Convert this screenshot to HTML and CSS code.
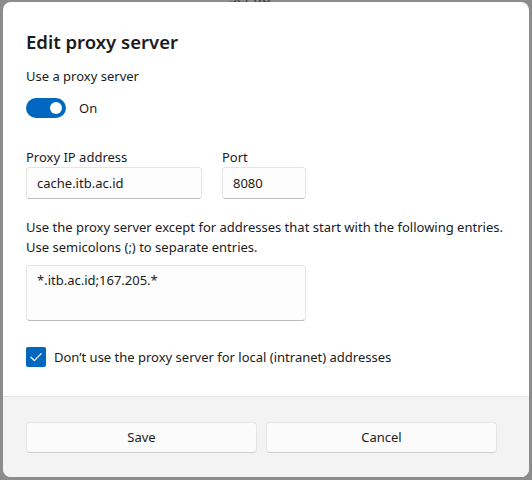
FILE: index.html
```html
<!DOCTYPE html>
<html>
<head>
<meta charset="utf-8">
<link rel="stylesheet" href="styles.css">
</head>
<body>
<div class="backdrop-text">Set up</div>
<div class="dialog">
  <div class="content">
    <h1 class="title">Edit proxy server</h1>
    <div class="label">Use a proxy server</div>
    <div class="toggle-row">
      <span class="toggle"><span class="knob"></span></span>
      <span class="toggle-text">On</span>
    </div>
    <div class="fields">
      <div class="field">
        <div class="label">Proxy IP address</div>
        <div class="input ip">cache.itb.ac.id</div>
      </div>
      <div class="field">
        <div class="label">Port</div>
        <div class="input port">8080</div>
      </div>
    </div>
    <p class="para">Use the proxy server except for addresses that start with the following entries.<br>Use semicolons (;) to separate entries.</p>
    <div class="input area">*.itb.ac.id;167.205.*</div>
    <div class="check-row">
      <span class="checkbox">
        <svg width="20" height="20" viewBox="0 0 20 20"><path d="M5 10.2 L8.4 13.6 L15.2 6.6" fill="none" stroke="#fff" stroke-width="1.3" stroke-linecap="round" stroke-linejoin="round"/></svg>
      </span>
      <span class="check-text">Don’t use the proxy server for local (intranet) addresses</span>
    </div>
  </div>
  <div class="footer">
    <div class="btn">Save</div>
    <div class="btn">Cancel</div>
  </div>
</div>
</body>
</html>
```

FILE: styles.css
```css
* { box-sizing: border-box; }
html, body { margin: 0; padding: 0; }
body {
  width: 532px;
  height: 480px;
  background: #8c8c8c;
  font-family: "Noto Sans", "Open Sans", sans-serif;
  color: #1b1b1b;
  position: relative;
  overflow: hidden;
  padding: 2px 3px 3px 3px;
}
.backdrop-text {
  position: absolute;
  top: -10px;
  left: 229px;
  font-size: 14px;
  line-height: 16px;
  color: #3a3a3a;
}
.dialog {
  position: relative;
  height: 475px;
  background: #fff;
  border-radius: 8px;
  overflow: hidden;
  display: flex;
  flex-direction: column;
}
.content {
  flex: 1;
  padding: 27px 24px 0 23px;
}
.title {
  margin: 0;
  font-size: 18.5px;
  font-weight: 600;
  line-height: 26px;
}
.label {
  font-size: 13px;
  line-height: 20px;
}
.content > .label { margin-top: 11px; }
.toggle-row {
  display: flex;
  align-items: center;
  margin-top: 12px;
  height: 20px;
}
.toggle {
  width: 40px;
  height: 20px;
  border-radius: 10px;
  background: #0067c0;
  position: relative;
  display: inline-block;
}
.knob {
  position: absolute;
  width: 12px;
  height: 12px;
  border-radius: 50%;
  background: #fff;
  top: 4px;
  right: 4px;
}
.toggle-text {
  margin-left: 13px;
  font-size: 13px;
}
.fields {
  display: flex;
  gap: 20px;
  margin-top: 29px;
}
.input {
  height: 32px;
  border: 1px solid #e5e5e5;
  border-bottom-color: #bcbcbc;
  border-radius: 4px;
  background: #fdfdfd;
  font-size: 13px;
  line-height: 30px;
  padding: 0 10px;
}
.ip { width: 176px; }
.port { width: 84px; }
.para {
  margin: 18px 0 0 0;
  font-size: 13px;
  line-height: 20px;
  white-space: nowrap;
}
.area {
  width: 280px;
  height: 56px;
  margin-top: 8px;
  line-height: 28px;
}
.check-row {
  display: flex;
  align-items: center;
  margin-top: 26px;
}
.checkbox {
  width: 20px;
  height: 20px;
  border-radius: 2px;
  background: #0067c0;
  display: inline-flex;
}
.check-text {
  margin-left: 8px;
  font-size: 13px;
}
.footer {
  height: 81px;
  background: #f3f3f3;
  border-top: 1px solid #e5e5e5;
  padding: 25px 32px 0 23px;
  display: grid;
  grid-template-columns: 1fr 1fr;
  gap: 9px;
  align-items: start;
}
.btn {
  height: 31px;
  background: #fbfbfb;
  border: 1px solid #e5e5e5;
  border-bottom-color: #cfcfcf;
  border-radius: 4px;
  font-size: 13px;
  line-height: 29px;
  text-align: center;
}
```
